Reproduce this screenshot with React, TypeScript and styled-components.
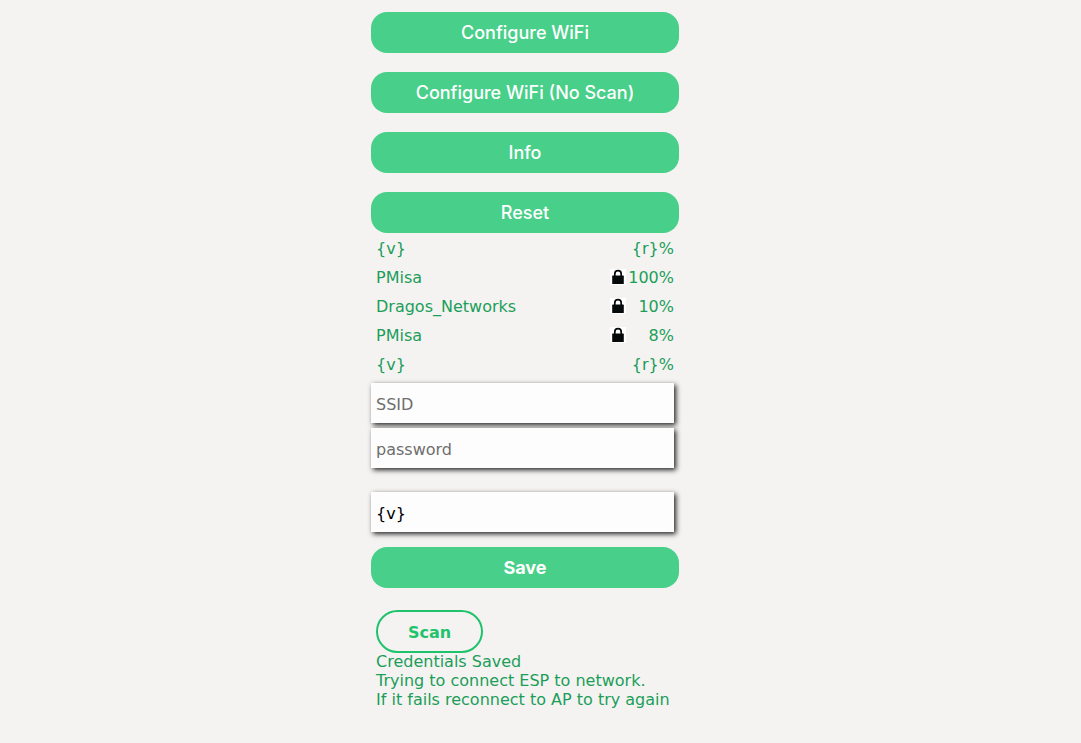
import React from "react";
import styled, { createGlobalStyle } from "styled-components";

const GlobalStyle = createGlobalStyle`
  *, *::before, *::after { box-sizing: border-box; }
  body {
    margin: 0;
    background: #f5f3f2;
    color: #1b9e59;
    font: 16px/19px Verdana, "DejaVu Sans", sans-serif;
  }
`;

const Page = styled.main`
  display: flex;
  justify-content: center;
  padding: 12px 31px 32px 0;
`;

const Column = styled.div`
  width: 100%;
  max-width: 308px;
`;

const Menu = styled.nav`
  display: flex;
  flex-direction: column;
  gap: 19px;
`;

const Button = styled.button<{ $bold?: boolean }>`
  display: block;
  width: 100%;
  height: 41px;
  padding: 0;
  border: 0;
  border-radius: 16px;
  background: #48cf89;
  color: #fff;
  font: ${(p) => (p.$bold ? 700 : 500)} 18px/41px Inter, sans-serif;
  text-align: center;
  cursor: pointer;
`;

const Networks = styled.ul`
  margin: 1px 0 4px;
  padding: 0 5px;
  list-style: none;
`;

const Network = styled.li`
  display: flex;
  align-items: center;
  height: 29px;
`;

const NetworkLink = styled.a`
  flex: 1;
  color: inherit;
  text-decoration: none;
`;

const Lock = styled.svg`
  width: 16px;
  height: 16px;
  margin-bottom: 1px;
  background: #fff;
`;

const Quality = styled.span`
  min-width: 48px;
  text-align: right;
`;

const Form = styled.form`
  display: flex;
  flex-direction: column;
`;

const Fields = styled.div<{ $after: number }>`
  display: flex;
  flex-direction: column;
  gap: 5px;
  margin: 0 5px ${(p) => p.$after}px 0;
`;

const Field = styled.input`
  width: 100%;
  height: 40px;
  padding: 2px 5px 0;
  border: 0;
  border-radius: 0;
  outline: 0;
  background: #fdfdfd;
  box-shadow: 2px 2px 5px #222;
  color: #000;
  font: inherit;

  &::placeholder {
    color: #6e6e6e;
    opacity: 1;
  }
`;

const Footer = styled.footer`
  padding: 22px 5px 0;
`;

const ScanLink = styled.a`
  display: block;
  width: 107px;
  height: 43px;
  border: 2px solid #1fc36c;
  border-radius: 22px;
  color: #1fc36c;
  font-weight: 700;
  line-height: 41px;
  text-align: center;
  text-decoration: none;
`;

const Status = styled.p`
  margin: -1px 0 0;
  white-space: nowrap;
`;

const menu = ["Configure WiFi", "Configure WiFi (No Scan)", "Info", "Reset"];

const networks = [
  { name: "{v}", quality: "{r}%", locked: false },
  { name: "PMisa", quality: "100%", locked: true },
  { name: "Dragos_Networks", quality: "10%", locked: true },
  { name: "PMisa", quality: "8%", locked: true },
  { name: "{v}", quality: "{r}%", locked: false },
];

const LockIcon = () => (
  <Lock viewBox="0 0 16 16" role="img" aria-label="Secured">
    <path d="M4.8 8V4.9a3.2 3.2 0 0 1 6.4 0V8" fill="none" stroke="#060a0a" strokeWidth="1.7" />
    <rect x="2.2" y="6.6" width="11.6" height="8.4" rx="0.6" fill="#060a0a" />
  </Lock>
);

export default function App() {
  return (
    <>
      <GlobalStyle />
      <Page>
        <Column>
          <Menu>
            {menu.map((label) => (
              <Button key={label} type="button">{label}</Button>
            ))}
          </Menu>
          <Networks>
            {networks.map((n, i) => (
              <Network key={i}>
                <NetworkLink href="#ssid">{n.name}</NetworkLink>
                {n.locked && <LockIcon />}
                <Quality>{n.quality}</Quality>
              </Network>
            ))}
          </Networks>
          <Form onSubmit={(e) => e.preventDefault()}>
            <Fields $after={24}>
              <Field id="ssid" name="ssid" placeholder="SSID" aria-label="SSID" />
              <Field type="password" name="password" placeholder="password" aria-label="password" />
            </Fields>
            <Fields $after={15}>
              <Field name="custom" defaultValue="{v}" aria-label="Custom parameter" />
            </Fields>
            <Button type="submit" $bold>Save</Button>
          </Form>
          <Footer>
            <ScanLink href="#scan">Scan</ScanLink>
            <Status>
              Credentials Saved
              <br />
              Trying to connect ESP to network.
              <br />
              If it fails reconnect to AP to try again
            </Status>
          </Footer>
        </Column>
      </Page>
    </>
  );
}
